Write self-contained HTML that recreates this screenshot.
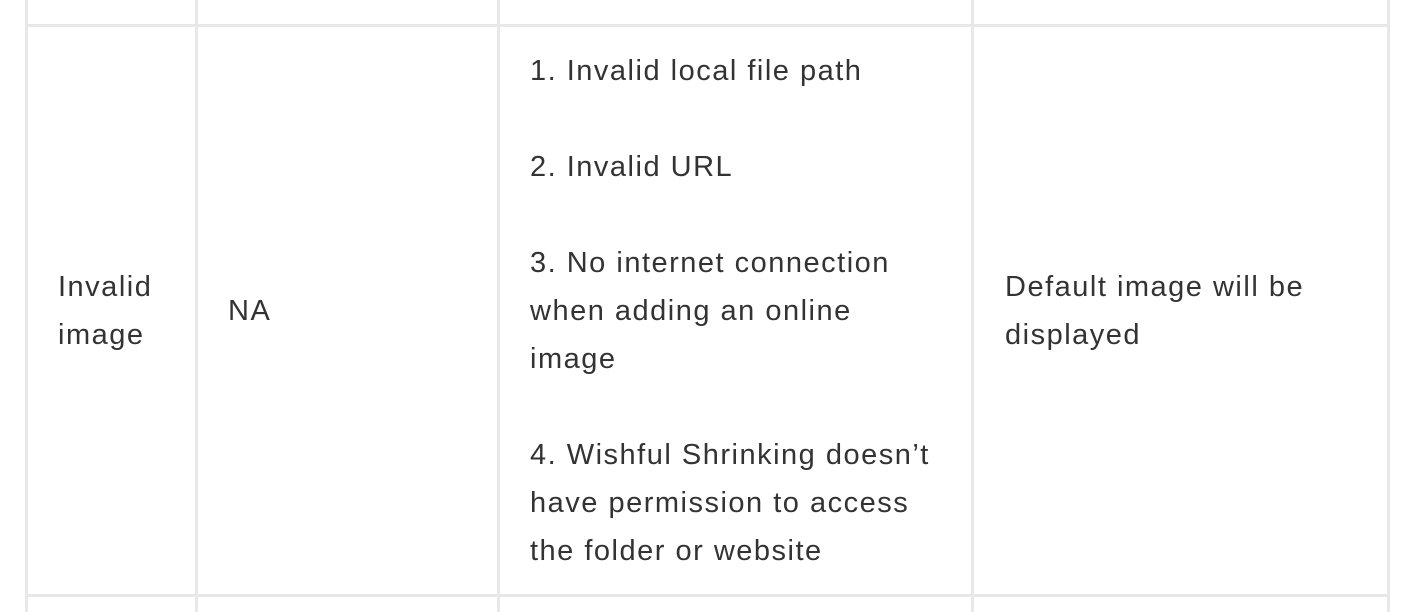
<!DOCTYPE html>
<html><head><style>
body{margin:0;width:1409px;height:612px;background:#fff;position:relative;overflow:hidden;font-family:"Liberation Sans",sans-serif;font-size:29px;letter-spacing:1.5px;color:#333;}
.v{position:absolute;top:0;height:612px;width:3px;background:#e8e8e8}
.h{position:absolute;left:25px;width:1365px;height:3px;background:#e8e8e8}
.t{position:absolute;line-height:48px;white-space:nowrap}
</style></head><body>
<div class="v" style="left:25px"></div>
<div class="v" style="left:195px"></div>
<div class="v" style="left:497px"></div>
<div class="v" style="left:971px"></div>
<div class="v" style="left:1387px"></div>
<div class="h" style="top:24px"></div>
<div class="h" style="top:594px"></div>
<div class="t" style="left:58px;top:263px">Invalid<br>image</div>
<div class="t" style="left:228px;top:287px">NA</div>
<div class="t" style="left:530px;top:47px">1. Invalid local file path</div>
<div class="t" style="left:530px;top:143px">2. Invalid URL</div>
<div class="t" style="left:530px;top:239px">3. No internet connection<br>when adding an online<br>image</div>
<div class="t" style="left:530px;top:431px">4. Wishful Shrinking doesn’t<br>have permission to access<br>the folder or website</div>
<div class="t" style="left:1005px;top:263px">Default image will be<br>displayed</div>
</body></html>
